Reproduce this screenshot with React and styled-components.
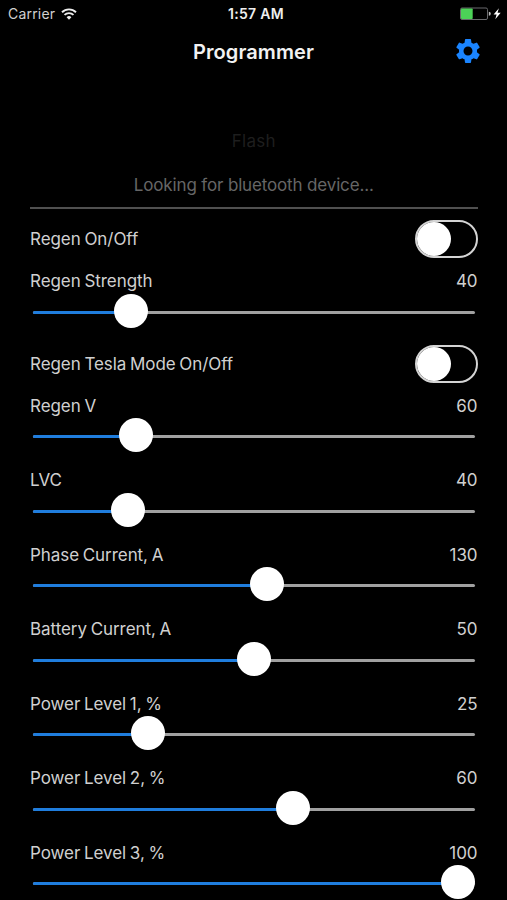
import React, { useState } from "react";
import styled, { createGlobalStyle } from "styled-components";
import { MdSettings } from "react-icons/md";

const SETTINGS = [
  { type: "switch", label: "Regen On/Off" },
  { type: "slider", label: "Regen Strength", value: 40, position: 19.8 },
  { type: "switch", label: "Regen Tesla Mode On/Off" },
  { type: "slider", label: "Regen V", value: 60, position: 21 },
  { type: "slider", label: "LVC", value: 40, position: 19.2 },
  { type: "slider", label: "Phase Current, A", value: 130, position: 53.3 },
  { type: "slider", label: "Battery Current, A", value: 50, position: 50.1 },
  { type: "slider", label: "Power Level 1, %", value: 25, position: 24 },
  { type: "slider", label: "Power Level 2, %", value: 60, position: 59.6 },
  { type: "slider", label: "Power Level 3, %", value: 100, position: 100 },
];

function StatusBar() {
  return (
    <Status>
      <div className="carrier">
        <span>Carrier</span>
        <svg width="16" height="12" viewBox="0 0 16 12" fill="none" stroke="#eee">
          <path d="M1 4.2a10 10 0 0 1 14 0" strokeWidth="1.9" />
          <path d="M3.5 6.9a6.4 6.4 0 0 1 9 0" strokeWidth="1.8" />
          <path d="M8 11.7 5.6 9.3a3.4 3.4 0 0 1 4.8 0z" fill="#eee" stroke="none" />
        </svg>
      </div>
      <div className="time">1:57 AM</div>
      <div className="power">
        <svg width="42" height="14" viewBox="0 0 42 14">
          <rect x="0.5" y="1" width="27" height="11.5" rx="1.5" fill="none" stroke="#69696c" />
          <rect x="1" y="1.5" width="11.7" height="10.5" rx="0.8" fill="#4cd257" />
          <path d="M28.8 4.8a2 2 0 0 1 0 4z" fill="#bbb" />
          <path d="M38.9 1.2 33.6 7.5h3l-1.3 4.8 5.4-6.6h-3.2z" fill="#fff" />
        </svg>
      </div>
    </Status>
  );
}

function SwitchSetting({ label }) {
  const [on, setOn] = useState(false);

  return (
    <SwitchRow>
      <Label>{label}</Label>
      <Toggle
        role="switch"
        aria-checked={on}
        aria-label={label}
        $on={on}
        onClick={() => setOn(!on)}
      >
        <ToggleKnob />
      </Toggle>
    </SwitchRow>
  );
}

function SliderSetting({ label, value, position }) {
  // the knob stays inside the track, so it travels the width minus its own size
  const left = `calc((100% - 34px) * ${position / 100})`;

  return (
    <SliderRow>
      <div className="text">
        <Label>{label}</Label>
        <Label>{value}</Label>
      </div>
      <Track>
        <Fill style={{ width: `calc(${left} + 17px)` }} />
        <Knob style={{ left }} />
      </Track>
    </SliderRow>
  );
}

export default function App() {
  return (
    <>
      <GlobalStyle />
      <Screen>
        <StatusBar />
        <Header>
          <h1>Programmer</h1>
          <button aria-label="Settings">
            <MdSettings size={30} />
          </button>
        </Header>
        <Content>
          <FlashButton disabled>Flash</FlashButton>
          <Message>Looking for bluetooth device...</Message>
          <Divider />
          {SETTINGS.map((item) =>
            item.type === "switch" ? (
              <SwitchSetting key={item.label} label={item.label} />
            ) : (
              <SliderSetting
                key={item.label}
                label={item.label}
                value={item.value}
                position={item.position}
              />
            )
          )}
        </Content>
      </Screen>
    </>
  );
}

const GlobalStyle = createGlobalStyle`
  * {
    box-sizing: border-box;
  }

  body {
    margin: 0;
    background: #000;
    overflow: hidden;
  }
`;

const Screen = styled.div`
  height: 900px;
  overflow: hidden;
  background: #000;
  color: #d0d0d0;
  font-family: Inter, "Liberation Sans", sans-serif;
`;

const Status = styled.div`
  display: grid;
  grid-template-columns: 1fr auto 1fr;
  align-items: center;
  height: 27px;
  padding: 0 5px 0 8px;
  font-size: 14px;

  .carrier {
    display: flex;
    align-items: center;
    gap: 6px;
    letter-spacing: 0.2px;
  }

  .time {
    margin-left: 2px;
    color: #eee;
    font-weight: 600;
    letter-spacing: 0.3px;
  }

  .power {
    display: flex;
    justify-content: flex-end;
  }
`;

const Header = styled.header`
  display: grid;
  grid-template-columns: 1fr auto 1fr;
  align-items: center;
  height: 50px;
  padding: 0 24px;

  h1 {
    grid-column: 2;
    margin: 0;
    color: #f2f2f2;
    font-size: 20px;
    font-weight: 600;
    letter-spacing: 0.1px;
  }

  button {
    display: flex;
    justify-self: end;
    padding: 0 0 2px;
    border: 0;
    background: none;
    color: #1a84ff;
  }
`;

const Content = styled.main`
  display: flex;
  flex-direction: column;
  padding: 42px 29.5px 0 30px;
`;

const FlashButton = styled.button`
  height: 44px;
  padding: 0;
  border: 0;
  background: none;
  color: #1e1e1e;
  font: inherit;
  font-size: 17px;
  letter-spacing: 0.25px;
`;

const Message = styled.p`
  margin: 0;
  height: 44px;
  line-height: 44px;
  color: #666;
  font-size: 17px;
  letter-spacing: -0.15px;
  text-align: center;
`;

const Divider = styled.div`
  height: 2px;
  background: #505050;
`;

const Label = styled.span`
  font-size: 17px;
  line-height: 20px;
  letter-spacing: -0.06px;
  word-spacing: -1px;
`;

const SwitchRow = styled.div`
  display: flex;
  align-items: center;
  justify-content: space-between;
  height: 50px;

  ${Divider} + & {
    margin-top: 5px;
  }
`;

const Toggle = styled.button`
  display: flex;
  align-items: center;
  justify-content: ${({ $on }) => ($on ? "flex-end" : "flex-start")};
  width: 63px;
  height: 38px;
  padding: 0;
  border: 2px solid #d4d4d4;
  border-radius: 19px;
  background: ${({ $on }) => ($on ? "#1a84ff" : "transparent")};
`;

const ToggleKnob = styled.span`
  width: 34px;
  height: 34px;
  border-radius: 50%;
  background: #fff;
`;

const SliderRow = styled.div`
  height: 74.5px;
  padding-top: 7px;

  .text {
    display: flex;
    justify-content: space-between;
  }
`;

const Track = styled.div`
  position: relative;
  height: 3px;
  margin: 19.5px 2.5px 0 3px;
  border-radius: 2px;
  background: #a0a0a0;
`;

const Fill = styled.div`
  height: 100%;
  border-radius: 2px;
  background: #1f7ddd;
`;

/* sits slightly above the centre of the track */
const Knob = styled.div`
  position: absolute;
  top: -17px;
  width: 34px;
  height: 34px;
  border-radius: 50%;
  background: #fff;
`;
